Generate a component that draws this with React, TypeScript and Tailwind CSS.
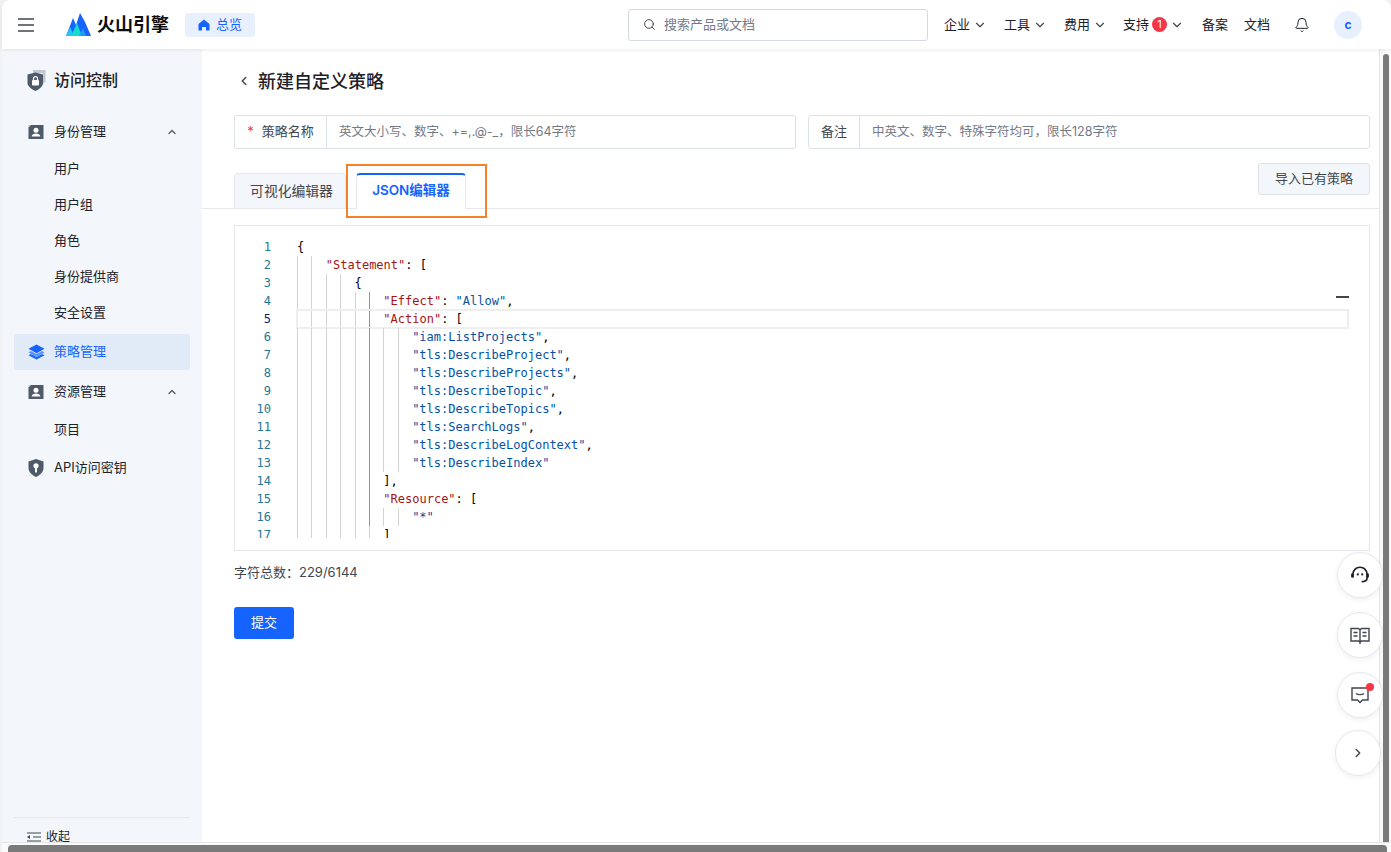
import { Bell, ChevronDown, ChevronLeft, ChevronRight, ChevronUp, Search } from "lucide-react";

type Part = { t: string; c?: "key" | "str" };
type CodeLine = { level: number; parts: Part[]; active?: boolean };

const key = (t: string): Part => ({ t, c: "key" });
const str = (t: string): Part => ({ t, c: "str" });
const p = (t: string): Part => ({ t });

const code: CodeLine[] = [
  { level: 0, parts: [p("{")] },
  { level: 2, parts: [key('"Statement"'), p(": [")] },
  { level: 4, parts: [p("{")] },
  { level: 6, parts: [key('"Effect"'), p(": "), str('"Allow"'), p(",")] },
  { level: 6, parts: [key('"Action"'), p(": [")], active: true },
  { level: 8, parts: [str('"iam:ListProjects"'), p(",")] },
  { level: 8, parts: [str('"tls:DescribeProject"'), p(",")] },
  { level: 8, parts: [str('"tls:DescribeProjects"'), p(",")] },
  { level: 8, parts: [str('"tls:DescribeTopic"'), p(",")] },
  { level: 8, parts: [str('"tls:DescribeTopics"'), p(",")] },
  { level: 8, parts: [str('"tls:SearchLogs"'), p(",")] },
  { level: 8, parts: [str('"tls:DescribeLogContext"'), p(",")] },
  { level: 8, parts: [str('"tls:DescribeIndex"')] },
  { level: 6, parts: [p("],")] },
  { level: 6, parts: [key('"Resource"'), p(": [")] },
  { level: 8, parts: [str('"*"')] },
  { level: 6, parts: [p("]")] },
];

const PersonIcon = () => (
  <svg width="16" height="16" viewBox="0 0 16 16">
    <path d="M3 1h12a.5.5 0 0 1 .5.5v13a.5.5 0 0 1-.5.5H1a.5.5 0 0 1-.5-.5V3.500z" fill="#4e5969" />
    <path d="M.5 1h1.800L.5 2.800z" fill="#a9afb8" />
    <circle cx="8" cy="6.300" r="2.500" fill="#fff" />
    <path d="M3.600 12.600c.4-2.200 2.200-3 4.400-3s4 .8 4.400 3z" fill="#fff" />
  </svg>
);

const LayersIcon = () => (
  <svg width="17" height="16" viewBox="0 0 18 16">
    <path d="M9 0l8.500 4.600L9 9.200.5 4.600z" fill="#1664ff" />
    <path d="M3 7l6 3.200L15 7l2.500 1.400L9 13 .5 8.400z" fill="#1664ff" opacity=".65" />
    <path d="M3 10.200l6 3.200 6-3.200 2.500 1.200L9 16 .5 11.400z" fill="#1664ff" />
  </svg>
);

const KeyShieldIcon = () => (
  <svg width="16" height="18" viewBox="0 0 16 18">
    <path d="M8 0l7.500 2.600v6.200c0 4.200-3.200 7.400-7.500 9.200C3.700 16.200.5 13 .5 8.800V2.600z" fill="#4e5969" />
    <circle cx="8" cy="6.800" r="2.600" fill="#fff" />
    <rect x="7" y="8" width="2" height="5.500" fill="#fff" />
  </svg>
);

const LockShieldIcon = () => (
  <svg width="19" height="21" viewBox="0 0 19 21">
    <path d="M6 0h12.500v12l-3 2V3H6z" fill="#c3c8d0" />
    <path d="M8.500 2.500l7.500 2v8.500c0 3.500-3.500 6-7.500 8-4-2-8-4.500-8-8V4.500z" fill="#4e5969" />
    <rect x="5" y="10" width="7" height="5.500" rx="1" fill="#fff" />
    <path d="M6.500 10V8.600a2 2 0 0 1 4 0V10" stroke="#fff" strokeWidth="1.200" fill="none" />
  </svg>
);

const Logo = () => (
  <svg width="25" height="23" viewBox="0 0 25 23">
    <path d="M0 23L7 5l3 7 4-12 5 9 6 14z" fill="#1664ff" />
    <path d="M0 23l4-9 4 9z" fill="#1fc8f5" />
    <path d="M5 23l6-13 5 13z" fill="#14dcc8" />
    <path d="M13 23l4-8 3 8z" fill="#1c9cf5" />
  </svg>
);

const SideItem = ({ label, icon, up }: { label: string; icon: React.ReactNode; up?: boolean }) => (
  <div className="flex h-9 items-center pl-[14px] pr-3 text-[13px] text-[#1d2129]">
    <span className="flex w-[26px] items-center">{icon}</span>
    <span>{label}</span>
    {up && <ChevronUp size={12} strokeWidth={2.500} className="ml-auto text-[#4e5969]" />}
  </div>
);

const SubItem = ({ label }: { label: string }) => (
  <div className="flex h-9 items-center pl-10 text-[13px] text-[#1d2129]">{label}</div>
);

const NavMenu = ({ label }: { label: string }) => (
  <div className="flex items-center gap-[3px]">
    <span>{label}</span>
    <ChevronDown size={14} strokeWidth={2} className="text-[#41464f]" />
  </div>
);

const Field = ({ label, required, placeholder, labelWidth }: { label: string; required?: boolean; placeholder: string; labelWidth: string }) => (
  <div className="flex h-[34px] flex-1 items-center rounded-[3px] border border-[#dde2e9] text-[13px]">
    <div className={`flex h-full shrink-0 items-center justify-center border-r border-[#dde2e9] text-[#41464f] ${labelWidth}`}>
      {required && <span className="mr-[8px] text-[#e63f3f]">*</span>}
      {label}
    </div>
    <span className="pl-3 text-[12.500px] text-[#737a87]">{placeholder}</span>
  </div>
);

const FloatButton = ({ children }: { children: React.ReactNode }) => (
  <div className="flex h-[46px] w-[46px] items-center justify-center rounded-full border border-[#e5e8ef] bg-white shadow-[0_2px_6px_rgba(0,0,0,0.06)]">
    {children}
  </div>
);

export default function App() {
  return (
    <div className="relative flex h-[852px] w-[1391px] flex-col overflow-hidden bg-[#f1f2f4] pl-[2px] font-['Inter','Noto_Sans_CJK_SC',sans-serif] text-[#1d2129]">
      {/* top bar */}
      <header className="relative z-10 flex h-[49px] shrink-0 items-center rounded-t-lg bg-white text-[13px] shadow-[0_1px_4px_rgba(0,0,0,0.08)]">
        <svg width="16" height="14" viewBox="0 0 16 14" className="ml-[16px]">
          <path d="M0 1h16M0 7h16M0 13h16" stroke="#41464f" strokeWidth="1.500" />
        </svg>
        <div className="ml-[32px] flex"><Logo /></div>
        <span className="ml-[6px] text-[18px] font-semibold text-[#0c0d0e]">火山引擎</span>
        <div className="ml-[16px] flex h-6 w-[70px] items-center justify-center gap-[6px] rounded bg-[#e8f0fe] text-[13px] text-[#1664ff]">
          <svg width="12" height="12" viewBox="0 0 12 12">
            <path d="M6 .5l5.500 4.500v6.500h-3.500V8H4v3.500H.5V5z" fill="#1664ff" />
          </svg>
          总览
        </div>
        <div className="ml-[373px] flex h-8 w-[300px] items-center gap-[8px] rounded-[3px] border border-[#d5d9e0] pl-[14px] text-[#737a87]">
          <Search size={13} strokeWidth={1.800} className="text-[#41464f]" />
          <span className="text-[13px]">搜索产品或文档</span>
        </div>
        <div className="ml-4 flex items-center text-[#1d2129]">
          <NavMenu label="企业" />
          <div className="ml-[17px]"><NavMenu label="工具" /></div>
          <div className="ml-[17px]"><NavMenu label="费用" /></div>
          <div className="ml-[16px] flex items-center">
            <span>支持</span>
            <span className="mx-[3px] flex h-[15px] w-[15px] items-center justify-center rounded-full bg-[#f5364a] text-[11px] text-white">1</span>
            <ChevronDown size={14} strokeWidth={2} className="text-[#41464f]" />
          </div>
          <span className="ml-[18px]">备案</span>
          <span className="ml-[16px]">文档</span>
          <Bell size={16} strokeWidth={1.500} className="ml-[24px] text-[#1d2129]" />
          <div className="ml-[24px] flex h-7 w-7 items-center justify-center rounded-full bg-[#e8f0fe] text-[12px] font-bold text-[#1664ff]">c</div>
        </div>
      </header>

      <div className="flex min-h-0 flex-1">
        {/* sidebar */}
        <aside className="flex w-[200px] shrink-0 flex-col overflow-hidden bg-[#f3f6fa]">
          <div className="flex h-[62px] items-center pl-[25px] text-[16px] font-medium text-[#1d2129]">
            <span className="mr-[8px] flex"><LockShieldIcon /></span>
            访问控制
          </div>
          <nav className="flex flex-1 flex-col px-3 pt-[3px]">
            <SideItem label="身份管理" icon={<PersonIcon />} up />
            <div className="mt-[1px]">
              <SubItem label="用户" />
              <SubItem label="用户组" />
              <SubItem label="角色" />
              <SubItem label="身份提供商" />
              <SubItem label="安全设置" />
            </div>
            <div className="mt-[3px] flex h-9 items-center rounded bg-[#e1eaf7] pl-[14px] pr-3 text-[13px] text-[#1664ff]">
              <span className="flex w-[26px] items-center"><LayersIcon /></span>
              策略管理
            </div>
            <div className="mt-1"><SideItem label="资源管理" icon={<PersonIcon />} up /></div>
            <div className="mt-[2px]"><SubItem label="项目" /></div>
            <div className="mt-[2px]"><SideItem label="API访问密钥" icon={<KeyShieldIcon />} /></div>
          </nav>
          <div className="mx-3 flex h-[25px] shrink-0 items-end overflow-hidden border-t border-[#e5e8ef] pl-[13px] text-[12px]">
            <div className="flex translate-y-[4px] items-center gap-[5px] text-[#1d2129]">
              <svg width="14" height="10" viewBox="0 0 14 10">
                <path d="M0 1h14M6 5h8M0 9h14" stroke="#41464f" strokeWidth="1.200" />
                <path d="M0 5l3-2v4z" fill="#41464f" />
              </svg>
              收起
            </div>
          </div>
        </aside>

        {/* main */}
        <main className="min-w-0 flex-1 bg-white pt-[16px]">
          <div className="flex h-[32px] items-center pl-[35px] text-[18px] font-medium text-[#1d2129]">
            <ChevronLeft size={14} strokeWidth={2.500} className="mr-[7px] text-[#41464f]" />
            新建自定义策略
          </div>
          <div className="mt-[18px] flex gap-3 pl-8 pr-[9px]">
            <Field label="策略名称" required labelWidth="w-[92px]" placeholder="英文大小写、数字、+=,.@-_，限长64字符" />
            <Field label="备注" labelWidth="w-[51px]" placeholder="中英文、数字、特殊字符均可，限长128字符" />
          </div>

          <div className="mt-[15px] flex h-[45px] items-end border-b border-[#e5e8ef] pl-8 pr-[9px]">
            <div className="flex h-[35px] w-[112px] items-center justify-center rounded-t border border-b-0 border-[#e5e8ef] bg-[#f3f6fa] pl-[3px] text-[13.800px] text-[#41464f]">
              可视化编辑器
            </div>
            <div className="ml-[10px] flex h-9 w-[110px] translate-y-[1px] items-center justify-center rounded-t border-x border-t-2 border-x-[#e5e8ef] border-t-[#1664ff] bg-white pb-[3px] text-[13.500px] font-semibold text-[#1664ff]">
              JSON编辑器
            </div>
            <div className="mb-[13px] ml-auto flex h-8 w-[112px] items-center justify-center rounded-[3px] border border-[#dde2e9] bg-[#f3f6fa] text-[13px] text-[#41464f]">
              导入已有策略
            </div>
          </div>

          {/* code editor */}
          <div className="relative ml-8 mr-[9px] mt-4 h-[326px] border border-[#e5e6eb] bg-white pt-3 font-['DejaVu_Sans_Mono',monospace] text-[12px]">
            <div className="h-[300px] overflow-hidden">
              {code.map((line, i) => (
                <div key={i} className="flex h-[18px] items-stretch leading-[18px]">
                  <span className={`w-[36px] shrink-0 text-right ${line.active ? "text-[#0b216f]" : "text-[#237893]"}`}>{i + 1}</span>
                  <div className={`ml-[26px] mr-[21px] flex min-w-0 flex-1 items-stretch ${line.active ? "outline-2 -outline-offset-1 outline-[#eeeeee]" : ""}`}>
                    {Array.from({ length: line.level }).map((_, g) => (
                      <span key={g} className={`w-[14.400px] shrink-0 border-l ${g === 5 && i > 2 && i < 16 ? "border-[#939393]" : "border-[#d3d3d3]"}`} />
                    ))}
                    <span className="whitespace-pre">
                      {line.parts.map((part, j) => (
                        <span key={j} className={part.c === "key" ? "text-[#a31515]" : part.c === "str" ? "text-[#0451a5]" : "text-black"}>{part.t}</span>
                      ))}
                    </span>
                  </div>
                </div>
              ))}
            </div>
            <div className="absolute right-[20px] top-[70px] h-[2px] w-[13px] bg-[#41464f]" />
          </div>

          <div className="ml-8 mt-[12px] text-[13px] leading-[18px] text-[#41464f]">字符总数：229/6144</div>
          <div className="ml-8 mt-[26px] flex h-8 w-[60px] items-center justify-center rounded-[3px] bg-[#1664ff] text-[13px] text-white">提交</div>
        </main>

        {/* vertical scrollbar */}
        <div className="w-[12px] shrink-0 border-l border-[#e5e5e5] bg-[#fafafa] pl-[3px] pt-[5px]">
          <div className="h-full w-[6px] rounded-t-full bg-[#7a7a7a]" />
        </div>
      </div>

      {/* horizontal scrollbar */}
      <div className="h-[10px] shrink-0 border-t border-[#e5e5e5] bg-[#fafafa] pl-[6px] pr-[4px] pt-[2px]">
        <div className="h-full rounded-t bg-[#7a7a7a]" />
      </div>

      {/* orange annotation */}
      <div className="absolute left-[346px] top-[164px] h-[54px] w-[141px] border-2 border-[#f5822a]" />

      {/* floating buttons */}
      <div className="absolute left-[1337px] top-[552px] flex flex-col gap-[14px]">
        <FloatButton>
          <svg width="20" height="18" viewBox="0 0 18 16" fill="none">
            <path d="M2.500 9V7.500a6.500 6.500 0 0 1 13 0V10c0 2.500-2 4-5 4" stroke="#1d2129" strokeWidth="1.500" />
            <rect x="1" y="6.500" width="2.500" height="4" rx="1" fill="#1d2129" />
            <rect x="14.500" y="6.500" width="2.500" height="4" rx="1" fill="#1d2129" />
            <circle cx="7" cy="7.500" r="1" fill="#1d2129" />
            <circle cx="11" cy="7.500" r="1" fill="#1d2129" />
          </svg>
        </FloatButton>
        <FloatButton>
          <svg width="20" height="17" viewBox="0 0 20 17" fill="none" stroke="#41464f" strokeWidth="1.400">
            <path d="M1 1.500h6.500A2.500 2.500 0 0 1 10 3v12a2.500 2.500 0 0 0-2.500-1H1zM19 1.500h-6.500A2.500 2.500 0 0 0 10 3v12a2.500 2.500 0 0 1 2.500-1H19z" />
            <path d="M3.500 5.500h4M3.500 9h4M12.500 5.500h4M12.500 9h4" />
          </svg>
        </FloatButton>
        <div className="relative">
          <FloatButton>
            <svg width="18" height="17" viewBox="0 0 18 17" fill="none" stroke="#41464f" strokeWidth="1.400">
              <path d="M1 1h16v12h-5.500L9 15.500 6.500 13H1z" />
              <path d="M5 6.500c1.500 1.500 6.500 1.500 8 0" />
            </svg>
          </FloatButton>
          <span className="absolute left-[29px] top-[11px] h-2 w-2 rounded-full bg-[#f5364a]" />
        </div>
      </div>
      <div className="absolute left-[1335px] top-[730px]">
        <FloatButton>
          <ChevronRight size={14} strokeWidth={2.500} className="text-[#41464f]" />
        </FloatButton>
      </div>
    </div>
  );
}
